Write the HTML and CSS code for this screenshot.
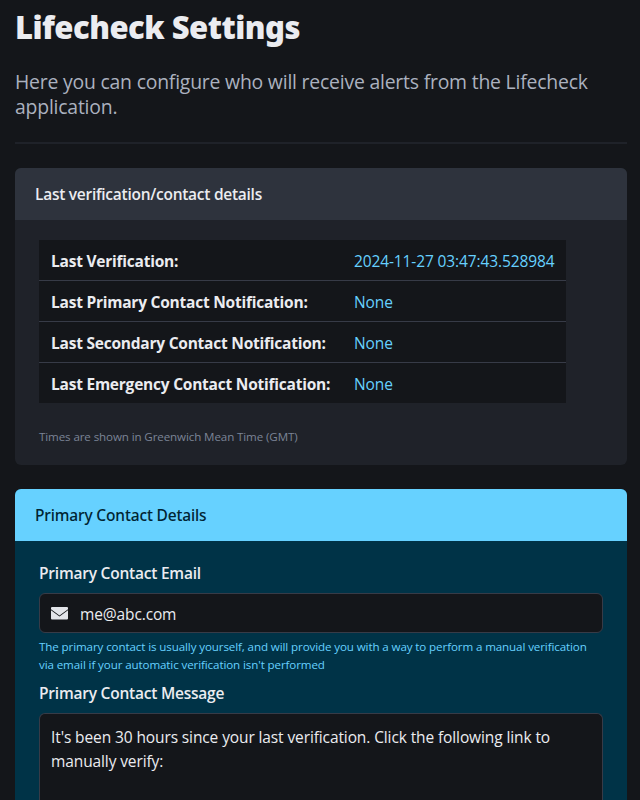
FILE: index.html
```
<!DOCTYPE html>
<html lang="en">
<head>
<meta charset="utf-8">
<title>Lifecheck Settings</title>
<link rel="stylesheet" href="styles.css">
</head>
<body>
<main class="page">
  <h1 class="title">Lifecheck Settings</h1>
  <p class="subtitle">Here you can configure who will receive alerts from the Lifecheck<br>application.</p>
  <hr class="divider">

  <article class="message">
    <header class="message-header">Last verification/contact details</header>
    <div class="message-body">
      <table class="table">
        <tr><th>Last Verification:</th><td>2024-11-27 03:47:43.528984</td></tr>
        <tr><th>Last Primary Contact Notification:</th><td>None</td></tr>
        <tr><th>Last Secondary Contact Notification:</th><td>None</td></tr>
        <tr><th>Last Emergency Contact Notification:</th><td>None</td></tr>
      </table>
      <p class="note">Times are shown in Greenwich Mean Time (GMT)</p>
    </div>
  </article>

  <article class="message is-info">
    <header class="message-header">Primary Contact Details</header>
    <div class="message-body">
      <div class="label">Primary Contact Email</div>
      <div class="input">
        <svg class="icon" viewBox="0 0 17 13"><path d="M1 0h15a1 1 0 0 1 1 1v1.300L8.500 8.600 0 2.300V1a1 1 0 0 1 1-1zM0 3.300l8.500 6.300L17 3.300V11.500a1 1 0 0 1-1 1H1a1 1 0 0 1-1-1z"/></svg>
        <span>me@abc.com</span>
      </div>
      <p class="help">The primary contact is usually yourself, and will provide you with a way to perform a manual verification<br>via email if your automatic verification isn't performed</p>
      <div class="label">Primary Contact Message</div>
      <div class="textarea">It's been 30 hours since your last verification. Click the following link to<br>manually verify:</div>
    </div>
  </article>
</main>
</body>
</html>
```
FILE: styles.css
```
* { box-sizing: border-box; margin: 0; padding: 0; }

body {
  background: #14161a;
  color: #ebecf0;
  font: 400 15.5px/24px "Open Sans", "Noto Sans", sans-serif;
  letter-spacing: -0.11px;
  white-space: nowrap;
}

.page {
  display: flex;
  flex-direction: column;
  width: 612px;
  height: 800px;
  margin-left: 15px;
  padding-top: 9px;
}

.title {
  font: 900 31px/36px "Noto Sans", "Open Sans", sans-serif;
  letter-spacing: -0.52px;
}

.subtitle {
  margin-top: 24px;
  color: #abb1bf;
  font-size: 19.4px;
  line-height: 25px;
  letter-spacing: -0.208px;
}

.divider { flex: none; height: 2px; margin: 23px 0 24px; border: 0; background: #1f2229; }

.message {
  flex: none;
  margin-bottom: 24px;
  border-radius: 6px;
  background: #1f2229;
  overflow: hidden;
}

.message-header {
  height: 52px;
  padding: 14px 20px;
  background: #2e333d;
  font-weight: 600;
  letter-spacing: -0.264px;
}

.message-body { padding: 20px 24px; }

.table {
  width: 527px;
  table-layout: fixed;
  border-collapse: collapse;
  background: #14161a;
}

.table tr + tr { border-top: 1px solid #373b47; }

.table th, .table td { height: 41px; padding: 2px 12px 0; text-align: left; }

.table tr:first-child > * { height: 40px; }

.table th { width: 303px; font-weight: 700; letter-spacing: -0.23px; }

.table td { color: #66d1ff; letter-spacing: -0.117px; }

.note {
  margin: 25px 0 -1px;
  color: #7b8496;
  font-size: 11.6px;
  line-height: 18px;
  letter-spacing: -0.115px;
}

.is-info {
  flex: 1 1 0;
  min-height: 0;
  display: flex;
  flex-direction: column;
  margin-bottom: 0;
  border-radius: 6px 6px 0 0;
  background: #003347;
}

.is-info .message-header {
  flex: none;
  background: #66d1ff;
  color: #002433;
  font-family: "Noto Sans", "Open Sans", sans-serif;
  font-weight: 500;
  letter-spacing: -0.146px;
}

.is-info .message-body {
  flex: 1;
  min-height: 0;
  display: flex;
  flex-direction: column;
  padding-bottom: 0;
}

.label { font-weight: 600; letter-spacing: -0.22px; }

.input, .textarea {
  border: 1px solid #373b47;
  border-radius: 6px;
  background: #14161a;
}

.input {
  flex: none;
  display: flex;
  align-items: center;
  gap: 12px;
  height: 40px;
  margin-top: 8px;
  padding: 2px 0 0 11px;
  letter-spacing: -0.13px;
}

.icon { width: 17px; height: 13px; margin-top: -1px; fill: #e2e4e9; }

.help {
  margin: 5px 0 7px;
  color: #66d1ff;
  font-size: 11.6px;
  line-height: 18px;
  letter-spacing: -0.113px;
}

.textarea {
  flex: 1;
  min-height: 0;
  margin-top: 8px;
  padding: 11px 11px 0;
  border-bottom: 0;
  border-radius: 6px 6px 0 0;
}
```
